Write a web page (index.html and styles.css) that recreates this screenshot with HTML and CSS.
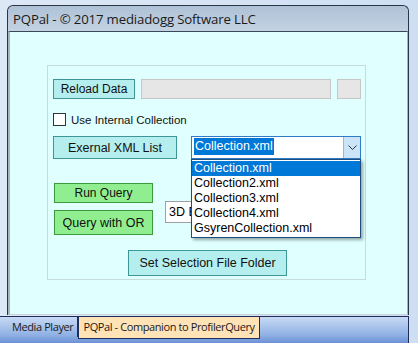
FILE: index.html
```html
<!DOCTYPE html>
<html lang="en">
<head>
    <meta charset="UTF-8">
    <meta name="viewport" content="width=device-width, initial-scale=1.0">
    <title>PQPal</title>
    <link rel="stylesheet" href="styles.css">
</head>
<body>

    <div class="desktop">
        <div class="window">
            <div class="titlebar">PQPal - &copy; 2017 mediadogg Software LLC</div>
            <div class="client">
                <div class="groupbox">

                    <div class="row row-reload">
                        <button class="btn btn-cyan btn-reload">Reload Data</button>
                        <div class="textbox-grey wide"></div>
                        <div class="textbox-grey small"></div>
                    </div>

                    <label class="check-row">
                        <span class="checkbox"></span>
                        Use Internal Collection
                    </label>

                    <div class="row row-xml">
                        <button class="btn btn-cyan btn-xml">Exernal XML List</button>
                        <div class="combo">
                            <div class="combo-text"><span class="selected">Collection.xml</span></div>
                            <div class="combo-arrow">
                                <svg width="9" height="6" viewBox="0 0 9 6">
                                    <path d="M0.5 0.5 L4.5 4.5 L8.5 0.5" fill="none" stroke="#333" stroke-width="1"/>
                                </svg>
                            </div>
                            <ul class="combo-list">
                                <li class="active">Collection.xml</li>
                                <li>Collection2.xml</li>
                                <li>Collection3.xml</li>
                                <li>Collection4.xml</li>
                                <li>GsyrenCollection.xml</li>
                            </ul>
                        </div>
                    </div>

                    <div class="row row-query">
                        <div class="query-buttons">
                            <button class="btn btn-green btn-run">Run Query</button>
                            <button class="btn btn-green btn-or">Query with OR</button>
                        </div>
                        <div class="textbox-white">3D E</div>
                    </div>

                    <div class="row row-folder">
                        <button class="btn btn-cyan btn-folder">Set Selection File Folder</button>
                    </div>

                </div>
            </div>
        </div>
    </div>

    <div class="tabstrip">
        <div class="tab">Media Player</div>
        <div class="tab tab-active">PQPal - Companion to ProfilerQuery</div>
    </div>

</body>
</html>
```

FILE: styles.css
```css
body {
    margin: 0;
    width: 418px;
    height: 343px;
    overflow: hidden;
    background: linear-gradient(to right, #dce8f6, #cfdff3);
    font-family: "Liberation Sans", Arial, sans-serif;
}

.desktop {
    height: 316px;
    padding: 5px 0 0 7px;
    box-sizing: border-box;
}

.window {
    width: 400px;
    height: 309px;
    border: 1px solid #2a3644;
    border-bottom: none;
    border-radius: 6px 6px 0 0;
    background: #b9cadc;
    display: flex;
    flex-direction: column;
}

.titlebar {
    height: 25px;
    padding-left: 5px;
    line-height: 26px;
    font-family: "Open Sans", "Noto Sans", sans-serif;
    font-size: 13.2px;
    letter-spacing: -0.15px;
    color: #1a1a1a;
    background: linear-gradient(#aec1d6, #c4d3e3);
    border-radius: 6px 6px 0 0;
}

.client {
    flex: 1;
    background: #e0ffff;
    border-top: 1px solid #3a4856;
    border-left: 2px solid #a8b4bc;
    border-right: 1px solid #a8b4bc;
    border-bottom: 1px solid #c8d4dc;
    padding: 33px 0 0 37px;
}

.groupbox {
    width: 319px;
    height: 215px;
    border: 1px solid #c6dcdc;
    padding: 13px 0 0 5px;
    box-sizing: border-box;
    display: flex;
    flex-direction: column;
}

.row {
    display: flex;
    align-items: flex-start;
}

.btn {
    font-family: "Liberation Sans", Arial, sans-serif;
    font-size: 12px;
    color: #111;
    padding: 0;
    cursor: pointer;
}

.btn-cyan {
    background-color: #b4eeee;
    border: 1px solid #3f9696;
}

.btn-green {
    background-color: #90ee90;
    border: 1px solid #3c9a3c;
}

.btn-reload {
    width: 82px;
    height: 20px;
}

.textbox-grey {
    height: 20px;
    background-color: #e6e6e6;
    border: 1px solid #c6c6c6;
    box-sizing: border-box;
    margin-left: 6px;
}

.textbox-grey.wide {
    width: 190px;
}

.textbox-grey.small {
    width: 24px;
}

.check-row {
    display: flex;
    align-items: center;
    margin-top: 14px;
    height: 13px;
    font-size: 11.5px;
    color: #111;
}

.checkbox {
    width: 11px;
    height: 11px;
    border: 1px solid #333;
    background: #fff;
    margin-right: 5px;
}

.row-xml {
    margin-top: 10px;
}

.btn-xml {
    width: 124px;
    height: 23px;
    font-size: 12.5px;
}

.combo {
    position: relative;
    width: 170px;
    height: 23px;
    margin-left: 14px;
    border: 1px solid #2f7bc8;
    box-sizing: border-box;
    background: #fff;
    display: flex;
}

.combo-text {
    flex: 1;
    padding: 2px 0 0 2px;
    font-size: 12.5px;
}

.selected {
    background-color: #0078d7;
    color: #fff;
    padding: 1px 1px 2px 1px;
}

.combo-arrow {
    width: 16px;
    background-color: #cce4f7;
    border-left: 1px solid #8cbbe6;
    display: flex;
    align-items: center;
    justify-content: center;
}

.combo-list {
    position: absolute;
    top: 22px;
    left: -1px;
    width: 170px;
    margin: 0;
    padding: 1px 0;
    list-style: none;
    background: #fff;
    border: 1px solid #1f4f7f;
    box-sizing: border-box;
    box-shadow: 2px 2px 3px rgba(0, 0, 0, 0.35);
    z-index: 2;
}

.combo-list li {
    height: 15px;
    line-height: 15px;
    padding-left: 2px;
    font-size: 12.5px;
    color: #000;
}

.combo-list li.active {
    background-color: #0078d7;
    color: #fff;
}

.row-query {
    margin-top: 24px;
}

.query-buttons {
    display: flex;
    flex-direction: column;
    gap: 7px;
    margin-left: 1px;
}

.btn-run {
    width: 99px;
    height: 20px;
}

.btn-or {
    width: 99px;
    height: 25px;
    font-size: 12.5px;
}

.textbox-white {
    width: 190px;
    height: 22px;
    margin: 18px 0 0 12px;
    padding: 3px 0 0 3px;
    box-sizing: border-box;
    background: #fff;
    border: 1px solid #a0a0a0;
    font-size: 12.5px;
    color: #000;
}

.row-folder {
    margin-top: 15px;
    padding-left: 75px;
}

.btn-folder {
    width: 159px;
    height: 26px;
    font-size: 12.5px;
}

.tabstrip {
    height: 27px;
    box-sizing: border-box;
    width: 409px;
    border-top: 1px solid #1e2d5a;
    border-right: 1px solid #1e2d5a;
    background: linear-gradient(#c8daf4, #8fb0e4 70%, #6b90d6);
    display: flex;
    align-items: flex-start;
    padding-left: 8px;
}

.tab {
    height: 20px;
    line-height: 19px;
    padding: 0 4px;
    font-family: "Open Sans", "Noto Sans", sans-serif;
    font-size: 11px;
    letter-spacing: -0.4px;
    color: #1a1a1a;
    border-right: 1px solid #1e2d5a;
}

.tab-active {
    background: #ffe2b6;
    border: 1px solid #1e2d5a;
    border-top: none;
    height: 21px;
}
```
